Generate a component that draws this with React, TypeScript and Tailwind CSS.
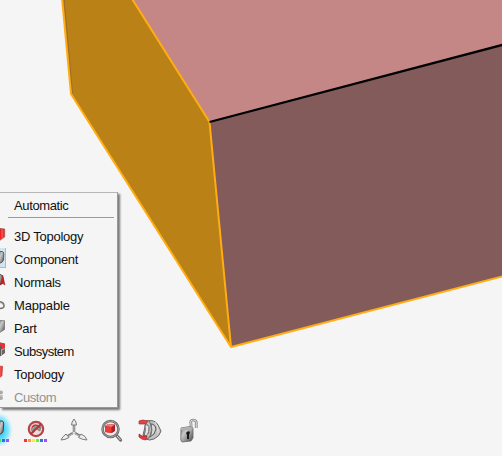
import React from "react";

const Defs = () => (
  <defs>
    <linearGradient id="metal" x1="0" y1="0" x2="1" y2="1">
      <stop offset="0" stopColor="#777" />
      <stop offset=".35" stopColor="#c9c9c9" />
      <stop offset="1" stopColor="#484848" />
    </linearGradient>
    <linearGradient id="red" x1="0" y1="0" x2="1" y2="0">
      <stop offset="0" stopColor="#e01818" />
      <stop offset=".5" stopColor="#ff5550" />
      <stop offset="1" stopColor="#c81c20" />
    </linearGradient>
  </defs>
);

type Kind = "solid" | "component" | "normals" | "mappable" | "part" | "subsystem" | "topology" | "custom";

const MenuIcon = ({ kind }: { kind: Kind }) => (
  <svg className="h-[23px] w-[7px] shrink-0" viewBox="0 0 7 23">
    {kind === "solid" && (
      <>
        <path d="M0 3.5 L4.5 4 V12 L0 15Z" fill="url(#red)" />
        <path d="M0 3.5 L4.7 4 V12 L0 15.3" fill="none" stroke="#9d4444" strokeWidth=".7" />
      </>
    )}
    {kind === "component" && (
      <>
        <rect x="-2" y="-.5" width="7.5" height="20" fill="#cfe6ef" stroke="#a9bcc4" />
        <path d="M-1 3.5 L2 3.5 Q4 3.7 3.8 6 L3.5 12 Q3 14.5 -1 15.5Z" fill="url(#metal)" stroke="#5c5c5c" />
      </>
    )}
    {kind === "normals" && (
      <>
        <path d="M-1 3 Q2 3 3 7 V12 L-1 14" fill="#999" stroke="#555" />
        <path d="M2.7 4 L5 14 L2.8 12.5 L0 14Z" fill="#cf2020" stroke="#842020" strokeWidth=".5" />
      </>
    )}
    {kind === "mappable" && (
      <>
        <path d="M-1 7.8 Q4 7.8 4 12 Q4 14.5 -1 14.5" fill="none" stroke="#747474" strokeWidth="1.6" />
        <path d="M-1 8.5 Q3 9 3.3 11.5" fill="none" stroke="#bbb" strokeWidth=".7" />
      </>
    )}
    {kind === "part" && <path d="M-1 3.5 L4.5 3.7 V12.5 L-1 16Z" fill="url(#metal)" stroke="#666" strokeWidth=".7" />}
    {kind === "subsystem" && (
      <>
        <path d="M0 3 L4.5 4 V13 L0 16Z" fill="#686868" stroke="#444" strokeWidth=".7" />
        <path d="M0 2.5 L4.8 3.5 V8 L1.5 9.5 V6 L0 5.5Z" fill="#ef302f" />
        <path d="M1.5 9.5 V15 M1.5 10 L4.8 8.5" stroke="#c9c9c9" strokeWidth=".7" />
      </>
    )}
    {kind === "topology" && (
      <path d="M-1 3 L2.6 3.3 L2 13 L-1 15Z" fill="url(#red)" stroke="#a63b30" strokeWidth=".5" />
    )}
    {kind === "custom" && (
      <>
        <circle cx="1" cy="6.5" r="2" fill="#aaa" />
        <circle cx="1" cy="12" r="2" fill="#aaa" />
        <path d="M-1 9.5 H3" stroke="#c6c6c6" />
      </>
    )}
  </svg>
);

const entries: { label: string; kind: Kind; tone: string }[] = [
  { label: "3D Topology", kind: "solid", tone: "tracking-[-0.25px]" },
  { label: "Component", kind: "component", tone: "tracking-[-0.37px]" },
  { label: "Normals", kind: "normals", tone: "tracking-[-0.22px]" },
  { label: "Mappable", kind: "mappable", tone: "tracking-[-0.17px]" },
  { label: "Part", kind: "part", tone: "tracking-[-0.3px]" },
  { label: "Subsystem", kind: "subsystem", tone: "tracking-[-0.5px]" },
  { label: "Topology", kind: "topology", tone: "tracking-[-0.25px]" },
  { label: "Custom", kind: "custom", tone: "tracking-[-0.45px] text-[#929292]" },
];

const colors = ["#ff3030", "#ff9838", "#ffe83c", "#69ef35", "#2475ed", "#9b52ff"];

const Scene = () => (
  <svg className="absolute inset-0 h-[456px] w-[502px]" viewBox="0 0 502 456">
    <path d="M62 -2 L71 94 L231 347 L209.5 122 L131 -2Z" fill="#ba8216" />
    <path d="M131 -2 L209.5 122 L504 45 V-2Z" fill="#c48785" />
    <path d="M209.5 122 L231 347 L504 276 V45Z" fill="#835b5b" />
    <g fill="none" strokeWidth="2" strokeLinejoin="round">
      <path d="M64 -2 L72.5 93" stroke="#9c6b31" strokeWidth="1" />
      <path d="M62 -2 L71 94 L231 347 L504 276 M131.5 -2 L209.5 122 L231 347" stroke="#ffad13" />
      <path d="M209.5 122 L504 44.5" stroke="#000" strokeWidth="2.3" />
    </g>
  </svg>
);

export default function App() {
  return (
    <main className="relative flex h-[456px] w-[502px] flex-col justify-end overflow-hidden bg-[#f5f5f5] font-['Liberation_Sans',Arial,sans-serif]">
      <Scene />
      <nav className="absolute top-[192px] left-0 flex h-[216px] w-[118px] flex-col border-t border-r border-b border-t-[#b7b7b7] border-r-[#999] border-b-[#999] bg-[#f5f5f5] text-[13px] tracking-[-0.37px] text-[#111] shadow-[2px_2px_2px_#777]">
        <div className="flex h-[24px] shrink-0 items-center pt-px pl-[14px]">Automatic</div>
        <div className="mr-[3px] ml-[8px] h-px shrink-0 bg-[#9b9b9b]" />
        <ul className="mt-[7px]">
          {entries.map(({ label, kind, tone }) => (
            <li key={label} className={`flex h-[23px] items-center gap-[7px] ${tone}`}>
              <MenuIcon kind={kind} />
              <span className="whitespace-nowrap">{label}</span>
            </li>
          ))}
        </ul>
      </nav>
      <footer className="relative flex h-[42px] items-start">
        <svg className="h-[32px] w-[24px] shrink-0" viewBox="0 0 24 32">
          <Defs />
          <defs>
            <radialGradient id="glow">
              <stop offset=".3" stopColor="#38d3ff" />
              <stop offset=".65" stopColor="#8de7ff" />
              <stop offset="1" stopColor="#f5f5f5" stopOpacity="0" />
            </radialGradient>
          </defs>
          <ellipse cx="-1" cy="16" rx="15" ry="19" fill="url(#glow)" />
          <path d="M-1 7 H2 Q4 7.2 3.7 10 L3.2 17 Q3 19 -1 21" fill="url(#metal)" stroke="#424242" />
          <path d="M-1 25h2v3h-2z" fill="#61e336" />
          <path d="M2 25h3v3H2z" fill="#2475ed" />
          <path d="M6 25h3v3H6z" fill="#9b52ff" />
        </svg>
        <svg className="h-[32px] w-[36px] shrink-0" viewBox="0 0 36 32">
          <circle cx="12" cy="15" r="7.2" fill="#e9dfdf" stroke="#b84448" strokeWidth="2.2" />
          <path d="M7 15 L9 12 L14 11 L17 13 L16 17 L12 15 L9 19Z" fill="#999" stroke="#765959" strokeWidth=".6" />
          <path d="M8 13 Q12 9 16 13.5" fill="none" stroke="#c83639" strokeWidth="1.5" />
          <path d="M6.8 20 L17 10" stroke="#b93338" strokeWidth="2" />
          {colors.map((c, i) => (
            <rect key={c} x={i * 4} y="25" width="3" height="3" fill={c} />
          ))}
        </svg>
        <svg className="h-[32px] w-[40px] shrink-0" viewBox="0 0 40 32" fill="none">
          <path d="M14 11 V18 M13 19 L6 23 M15 19 L22 23" stroke="#777" strokeWidth="2.5" />
          <path d="M14 10 V19 L7 23 M14 19 L21 23" stroke="#d0d0d0" strokeWidth=".8" />
          <path d="M14 5 Q11.5 8 11.5 11 H16.5 Q16.5 8 14 5Z M6 20 L9 23.5 Q5 26 1 26 Q2 23 6 20Z M21 20 L18.5 23.5 Q23 26 27 26 Q26 22 21 20Z" fill="#ededed" stroke="#7a7a7a" strokeWidth="1" />
        </svg>
        <svg className="h-[32px] w-[38px] shrink-0" viewBox="0 0 38 32">
          <path d="M17 22 L20.5 26" stroke="#6b6b6b" strokeWidth="3.3" strokeLinecap="round" />
          <path d="M17 22 L20.5 26" stroke="#ddd" strokeWidth="1" />
          <circle cx="10.5" cy="15" r="8" fill="#ececec" stroke="#666" strokeWidth="2.5" />
          <circle cx="10.5" cy="15" r="8" fill="none" stroke="#b0b0b0" strokeWidth=".8" />
          <path d="M5 12 L8 10 L15 10.5 V17 L12 19 L5 18Z" fill="#a72227" />
          <path d="M5 12.5 L11.5 13 V19 L5 18Z" fill="#ee3936" />
          <path d="M5 12 L8 10 L15 10.5 L11.5 13Z" fill="#ff7770" />
        </svg>
        <svg className="h-[32px] w-[42px] shrink-0" viewBox="0 0 42 32">
          <path d="M8 7 Q17 5 20 11 L23 17 Q22 22 16 25 Q11 27 8 25 L5 21 L7 13Z" fill="#c2c2c2" stroke="#666" />
          <path d="M7 11 Q11 10 11 14 Q11 22 6 22 Q8 17 7 11Z" fill="#e8e8e8" stroke="#666" />
          <path d="M13 10 Q17 10 18 15 Q17 21 12 23 Q15 16 13 10Z" fill="#d7d7d7" stroke="#555" />
          <path d="M11 7 Q14 11 13.5 17 Q13 23 9 25" fill="none" stroke="#777" strokeWidth="1.2" />
          <path d="M17 8 Q21 13 20 19" fill="none" stroke="#eee" strokeWidth=".8" />
          <path d="M1 7 Q4 5 10 7 L8 10 L1 10Z" fill="#ec4245" stroke="#943d40" strokeWidth=".7" />
          <path d="M1 20 L4 22 L9 22 L8 26 Q4 26 1 23Z" fill="#ec3639" stroke="#853235" strokeWidth=".7" />
        </svg>
        <svg className="h-[32px] w-[24px] shrink-0" viewBox="0 0 24 32">
          <path d="M11 14 V10 Q10 6 13 6 Q17 6 16.2 10 V14" fill="none" stroke="#777" strokeWidth="2.7" />
          <path d="M11 14 V10 Q10 6 13 6 Q17 6 16.2 10 V14" fill="none" stroke="#ddd" strokeWidth="1.2" />
          <path d="M1 14 L10 12.5 L13 14 V24 L11 27 L2 28 L.8 26Z" fill="url(#metal)" stroke="#666" strokeWidth=".8" />
          <path d="M1 14 L10 12.5 L13 14 L11 16 L1 16Z" fill="#b0b0b0" />
          <path d="M6 19 Q8 16 10 18 L9 21 V25 H7 V21Z" fill="#171717" />
        </svg>
      </footer>
    </main>
  );
}
